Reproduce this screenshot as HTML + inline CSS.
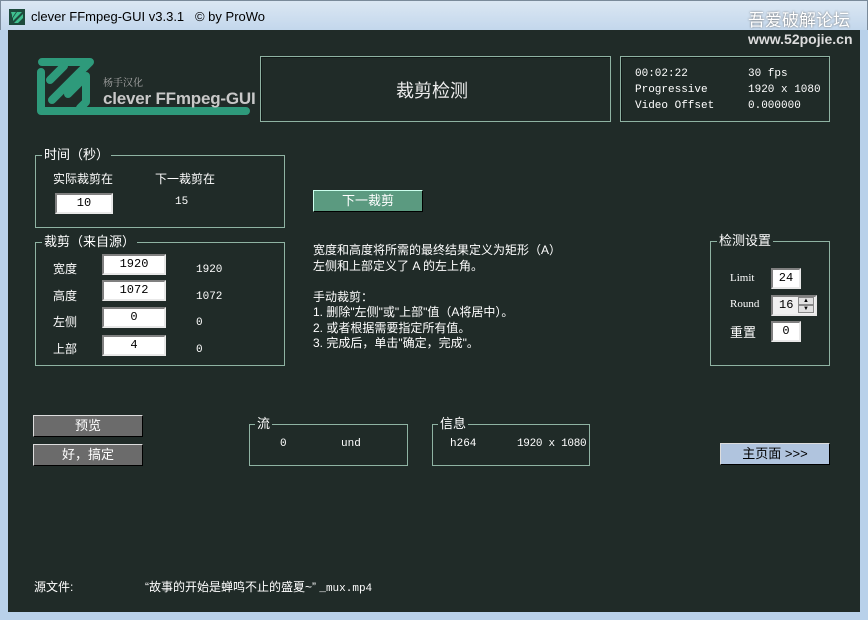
<!DOCTYPE html>
<html><head><meta charset="utf-8"><style>
*{margin:0;padding:0;box-sizing:border-box}
body{width:868px;height:620px;background:#b9d1ea;position:relative;overflow:hidden;font-family:"Liberation Sans","Noto Sans CJK SC",sans-serif;color:#fff;font-size:12px}
.tb{position:absolute;left:0;top:0;width:868px;height:30px;background:linear-gradient(#dbe7f3,#c3d7ec);border:1px solid #7a8a9a;border-bottom:none}
.cl{position:absolute;left:8px;top:30px;width:852px;height:582px;background:#202b28}
.a{position:absolute;white-space:nowrap}
.box{position:absolute;border:1px solid #8fb3a3;box-shadow:inset 1px 1px 0 #101816}
.gb{position:absolute;border:1px solid #8fb3a3}
.gb .t{position:absolute;top:-9px;left:6px;background:#202b28;padding:0 2px;font-size:13px;line-height:16px}
.inp{position:absolute;background:#fff;color:#000;border:2px solid;border-color:#808080 #e8e8e8 #e8e8e8 #808080;text-align:center;font-family:"Liberation Mono",monospace;font-size:12px;line-height:17px}
.btn{position:absolute;border:1px solid;border-color:#ddd #000 #000 #ddd;text-align:center;font-size:13px;line-height:20px}
.m{font-family:"Liberation Mono",monospace;font-size:11px}
</style></head><body>
<div class="tb"></div>
<svg class="a" style="left:9px;top:9px" width="16" height="16"><rect width="16" height="16" fill="#1d4a3c"/><path d="M2 3h5L3 9v-3zM5 14l9-9v4l-5 5zM8 3h5l-9 9V9z" fill="#3fbf8f"/></svg>
<div class="a" style="left:31px;top:9px;color:#000;font-size:13px">clever FFmpeg-GUI v3.3.1 &nbsp;&nbsp;© by ProWo</div>
<div class="a" style="left:748px;top:6px;color:#fff;font-size:17px;text-shadow:0 0 2px #666">吾爱破解论坛</div>
<div class="cl"></div>
<div class="a" style="left:748px;top:31px;color:#ddd;font-size:14px;font-weight:bold">www.52pojie.cn</div>
<svg class="a" style="left:30px;top:50px" width="225" height="75">
<g fill="none" stroke="#2e9a7b" stroke-width="8" stroke-linejoin="round" stroke-linecap="round">
<path d="M12,12 H60 L22,50"/>
<path d="M11,22 V61 H216"/>
<path d="M38,44 L56,26 V52 L50,58"/>
<path d="M20,30 L34,16"/>
</g></svg>
<div class="a" style="left:103px;top:74px;color:#aaa;font-size:10px;font-family:'Liberation Serif','Noto Serif CJK SC',serif">杨手汉化</div>
<div class="a" style="left:103px;top:89px;color:#c8c8c8;font-size:17px;font-weight:bold;letter-spacing:-0.2px">clever FFmpeg-GUI</div>
<div class="box" style="left:260px;top:56px;width:351px;height:66px"></div>
<div class="a" style="left:396px;top:77px;font-size:18px;color:#eee">裁剪检测</div>
<div class="box" style="left:620px;top:56px;width:210px;height:66px"></div>
<div class="a m" style="left:635px;top:66px;line-height:16px">00:02:22<br>Progressive<br>Video Offset</div>
<div class="a m" style="left:748px;top:66px;line-height:16px">30 fps<br>1920 x 1080<br>0.000000</div>

<div class="gb" style="left:35px;top:155px;width:250px;height:73px"><span class="t">时间（秒）</span></div>
<div class="a" style="left:53px;top:170px;font-size:12px">实际裁剪在</div>
<div class="a" style="left:155px;top:170px;font-size:12px">下一裁剪在</div>
<div class="inp" style="left:55px;top:193px;width:58px;height:21px">10</div>
<div class="a m" style="left:175px;top:196px">15</div>

<div class="gb" style="left:35px;top:242px;width:250px;height:124px"><span class="t">裁剪（来自源）</span></div>
<div class="a" style="left:53px;top:256px;font-size:12px;line-height:26.5px">宽度<br>高度<br>左侧<br>上部</div>
<div class="inp" style="left:102px;top:254px;width:64px;height:21px">1920</div>
<div class="inp" style="left:102px;top:280px;width:64px;height:21px">1072</div>
<div class="inp" style="left:102px;top:307px;width:64px;height:21px">0</div>
<div class="inp" style="left:102px;top:335px;width:64px;height:21px">4</div>
<div class="a m" style="left:196px;top:257px;line-height:26.5px">1920<br>1072<br>0<br>0</div>

<div class="btn" style="left:313px;top:190px;width:110px;height:22px;background:#5b9a80;border-color:#cfe #000 #000 #cfe">下一裁剪</div>
<div class="a" style="left:313px;top:243px;font-size:12px;line-height:15.5px">宽度和高度将所需的最终结果定义为矩形（A）<br>左侧和上部定义了 A 的左上角。<br><br>手动裁剪：<br>1. 删除"左侧"或"上部"值（A将居中）。<br>2. 或者根据需要指定所有值。<br>3. 完成后，单击"确定，完成"。</div>

<div class="gb" style="left:710px;top:241px;width:120px;height:125px"><span class="t">检测设置</span></div>
<div class="a" style="left:730px;top:265px;font-family:'Liberation Serif',serif;font-size:11px;line-height:26px">Limit<br>Round</div>
<div class="a" style="left:730px;top:322px;font-size:13px">重置</div>
<div class="inp" style="left:771px;top:268px;width:30px;height:21px">24</div>
<div class="inp" style="left:771px;top:295px;width:46px;height:21px;text-align:left;padding-left:6px;background:#f0f0f0">16</div>
<div class="a" style="left:798px;top:297px;width:16px;height:8px;background:#e0e0e0;border:1px solid #888;font-size:6px;line-height:6px;color:#000;text-align:center">▲</div>
<div class="a" style="left:798px;top:305px;width:16px;height:8px;background:#e0e0e0;border:1px solid #888;font-size:6px;line-height:6px;color:#000;text-align:center">▼</div>
<div class="inp" style="left:771px;top:321px;width:30px;height:21px">0</div>

<div class="btn" style="left:33px;top:415px;width:110px;height:22px;background:#6b6b6b">预览</div>
<div class="btn" style="left:33px;top:444px;width:110px;height:22px;background:#6b6b6b">好，搞定</div>

<div class="gb" style="left:249px;top:424px;width:159px;height:42px"><span class="t" style="left:5px">流</span></div>
<div class="a m" style="left:280px;top:438px">0</div>
<div class="a m" style="left:341px;top:438px">und</div>
<div class="gb" style="left:432px;top:424px;width:158px;height:42px"><span class="t" style="left:5px">信息</span></div>
<div class="a m" style="left:450px;top:438px">h264</div>
<div class="a m" style="left:517px;top:438px;letter-spacing:-0.3px">1920 x 1080</div>

<div class="btn" style="left:720px;top:443px;width:110px;height:22px;background:#b0c4de;color:#000">主页面 &gt;&gt;&gt;</div>

<div class="a" style="left:34px;top:578px;font-size:12px">源文件:</div>
<div class="a" style="left:145px;top:578px;font-size:12px">“故事的开始是蝉鸣不止的盛夏~” <span class="m">_mux.mp4</span></div>
</body></html>
